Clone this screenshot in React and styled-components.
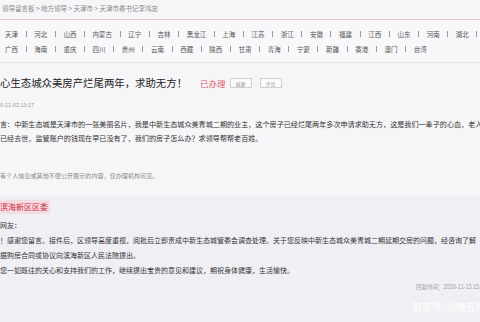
import React from 'react'
import styled, { createGlobalStyle } from 'styled-components'

const GlobalStyle = createGlobalStyle`
  html, body {
    margin: 0;
    padding: 0;
    background: #f6f5f8;
  }
  body {
    font-family: "Noto Sans CJK SC", "Noto Sans", sans-serif;
    color: #333;
  }
`

const rows = [
  ['天津', '河北', '山西', '内蒙古', '辽宁', '吉林', '黑龙江', '上海', '江苏', '浙江', '安徽', '福建', '江西', '山东', '河南', '湖北'],
  ['广西', '海南', '重庆', '四川', '贵州', '云南', '西藏', '陕西', '甘肃', '青海', '宁夏', '新疆', '香港', '澳门', '台湾'],
]

const replyLines = [
  '网友：',
  '！感谢您留言。接件后，区领导高度重视，阅批后立即责成中新生态城管委会调查处理。关于您反映中新生态城众美青城二期延期交房的问题，经咨询了解',
  '据购房合同或协议向滨海新区人民法院提出。',
  '您一如既往的关心和支持我们的工作，继续提出宝贵的意见和建议，期祝身体健康，生活愉快。',
]

function App() {
  return (
    <Page>
      <GlobalStyle />
      <Breadcrumb>领导留言板 &gt; 地方领导 &gt; 天津市 &gt; 天津市委书记李鸿忠</Breadcrumb>

      <ProvinceNav>
        {rows.map((row, i) => (
          <ProvinceRow key={i}>
            {row.map((name, j) => (
              <React.Fragment key={name}>
                {j > 0 && <Sep />}
                <ProvinceLink>{name}</ProvinceLink>
              </React.Fragment>
            ))}
            {i === 0 && <Sep />}
          </ProvinceRow>
        ))}
      </ProvinceNav>

      <Message>
        <TitleRow>
          <Title>心生态城众美房产烂尾两年，求助无方！</Title>
          <Status>已办理</Status>
          <TagButton $gap={4}>城建</TagButton>
          <TagButton $gap={8}>评论</TagButton>
        </TitleRow>
        <Meta>0-11-02 13:17</Meta>
        <Body>
          <BodyLine>言：中新生态城是天津市的一张美丽名片，我是中新生态城众美青城二期的业主，这个房子已经烂尾两年多次申请求助无方，这是我们一辈子的心血，老人</BodyLine>
          <BodyLine>已经去世，监管账户的钱现在早已没有了，我们的房子怎么办？求领导帮帮老百姓。</BodyLine>
        </Body>
        <Notice>有个人信息或其他不便公开展示的内容，仅办理机构可见。</Notice>
      </Message>

      <Reply>
        <ReplyHeader><Org>滨海新区区委</Org></ReplyHeader>
        {replyLines.map((line, i) => (
          <ReplyLine key={i}>{line}</ReplyLine>
        ))}
        <ReplyTime>回复时间：2020-11-15 15:30</ReplyTime>
        <Watermark>百家号/北晚在线</Watermark>
      </Reply>
    </Page>
  )
}

const Page = styled.div`
  position: relative;
  width: 480px;
  height: 322px;
  overflow: hidden;
  background: #f6f5f8;
`

const Breadcrumb = styled.div`
  box-sizing: border-box;
  height: 20px;
  line-height: 17px;
  padding-left: 2px;
  font-size: 6.5px;
  color: #8a8a8a;
  white-space: nowrap;
  border-bottom: 1px solid #ecc3c7;
`

const ProvinceNav = styled.div`
  padding: 7px 0 6px 5px;
  border-bottom: 1px solid #e8e7ec;
  background: #f8f7fa;
`

const ProvinceRow = styled.div`
  display: flex;
  align-items: center;
  height: 14.5px;
  white-space: nowrap;
  overflow: hidden;
`

const ProvinceLink = styled.span`
  flex: none;
  font-size: 6.5px;
  line-height: 14.5px;
  color: #555;
`

const Sep = styled.span`
  flex: none;
  width: 1px;
  height: 6px;
  margin: 0 7.6px;
  background: #9a9a9a;
`

const Message = styled.div`
  padding-top: 9px;
`

const TitleRow = styled.div`
  display: flex;
  align-items: center;
  height: 22px;
  white-space: nowrap;
`

const Title = styled.h1`
  margin: 0;
  font-size: 10.4px;
  font-weight: 400;
  color: #222;
  line-height: 22px;
`

const Status = styled.span`
  margin-left: 13px;
  font-size: 8.5px;
  color: #d8566a;
`

const TagButton = styled.span`
  box-sizing: border-box;
  width: 22px;
  height: 10px;
  margin-left: ${p => p.$gap}px;
  display: flex;
  align-items: center;
  justify-content: center;
  font-size: 5px;
  color: #999;
  border: 1px solid #cfcfd4;
  background: #fbfbfc;
`

const Meta = styled.div`
  margin-top: 6px;
  line-height: 10px;
  font-size: 5.5px;
  color: #999;
`

const Body = styled.div`
  margin-top: 7px;
`

const BodyLine = styled.p`
  margin: 0;
  line-height: 14px;
  font-size: 7.1px;
  color: #333;
  white-space: nowrap;
`

const Notice = styled.div`
  margin-top: 25px;
  line-height: 12px;
  font-size: 6.1px;
  color: #8c8c8c;
`

const Reply = styled.div`
  box-sizing: border-box;
  height: 130px;
  margin-top: 11px;
  padding-top: 5px;
  background: #efeff4;
  border-top: 2px solid #f7f7f9;
`

const ReplyHeader = styled.div`
  height: 14px;
  display: flex;
  align-items: center;
`

const Org = styled.span`
  font-size: 8px;
  line-height: 14px;
  padding-right: 2px;
  color: #d2283e;
  background: #f3dde3;
`

const ReplyLine = styled.p`
  margin: 0;
  line-height: 15px;
  font-size: 7px;
  color: #333;
  white-space: nowrap;
  &:first-of-type { margin-top: 4px; }
`

const ReplyTime = styled.div`
  margin-top: 4px;
  padding-left: 416px;
  line-height: 10px;
  font-size: 5.5px;
  color: #999;
  white-space: nowrap;
`

const Watermark = styled.div`
  position: absolute;
  right: -6px;
  bottom: 8px;
  font-size: 10px;
  font-weight: 700;
  color: #ffffff;
  opacity: 0.75;
  white-space: nowrap;
`

export default App
